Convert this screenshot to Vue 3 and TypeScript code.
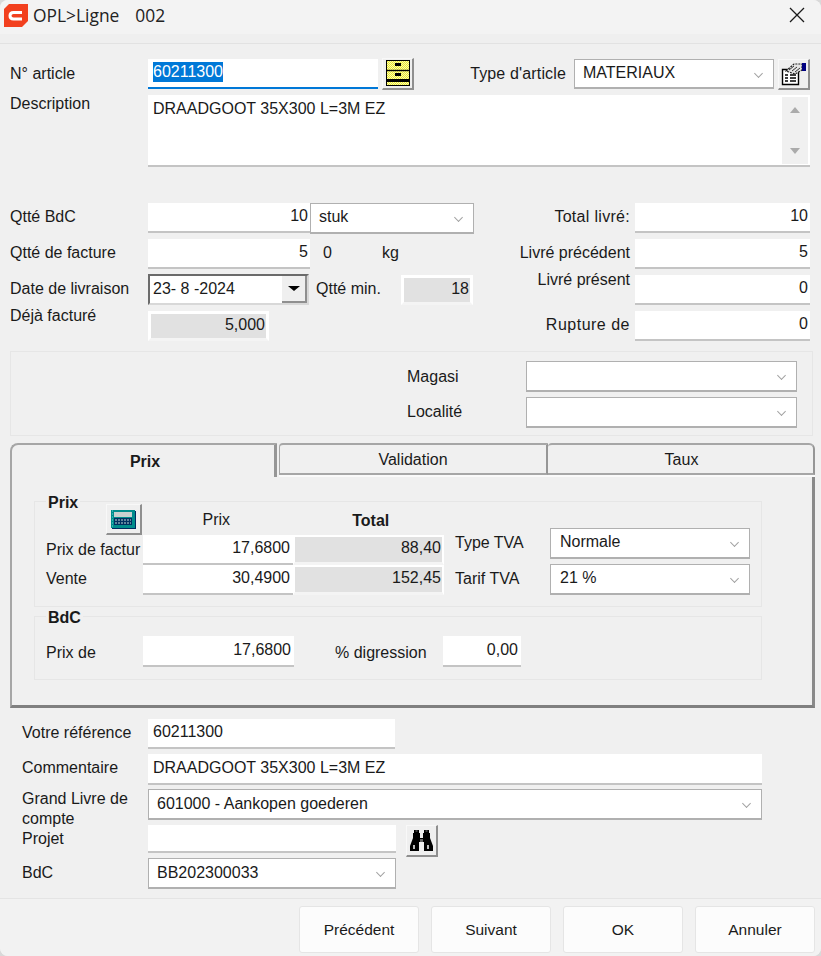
<script setup lang="ts">
const buttons: string[] = ['Précédent', 'Suivant', 'OK', 'Annuler']
</script>

<template>
  <div class="dialog">
    <header class="titlebar">
      <svg class="logo" width="25" height="25" viewBox="0 0 25 25">
        <path d="M6 1H25V18L19 24H1V6Z" fill="#f2401e" />
        <path d="M19 9.5H10.5Q7 9.5 7 12.7T10.5 16H19" fill="none" stroke="#fff" stroke-width="3" />
      </svg>
      <span class="title">OPL&gt;Ligne</span>
      <span class="title-num">002</span>
      <svg class="close" width="16" height="16" viewBox="0 0 16 16">
        <path d="M1 1L15 15M15 1L1 15" stroke="#1a1a1a" stroke-width="1.3" fill="none" />
      </svg>
    </header>
    <div class="title-strip"></div>

    <main class="form">
      <div class="row r-article">
        <span class="lab w138">N° article</span>
        <div class="edit focus w230"><span class="selected">60211300</span></div>
        <button class="tool drawer-btn">
          <svg width="24" height="26" viewBox="0 0 24 26">
            <defs>
              <pattern id="dither" width="2" height="2" patternUnits="userSpaceOnUse">
                <rect width="2" height="2" fill="#f4f4c0" />
                <rect width="1" height="1" fill="#f0f020" />
                <rect x="1" y="1" width="1" height="1" fill="#f0f020" />
              </pattern>
            </defs>
            <rect x="0.5" y="0.5" width="23" height="25" fill="url(#dither)" stroke="#000" />
            <path d="M1 10.5H23" stroke="#000" stroke-width="1.4" />
            <rect x="1" y="19" width="22" height="3" fill="#000" />
            <rect x="9" y="3" width="6" height="3" fill="#000" />
            <rect x="9" y="13" width="6" height="3" fill="#000" />
          </svg>
        </button>
        <span class="lab type-lab">Type d'article</span>
        <div class="combo w200 type-combo">MATERIAUX</div>
        <button class="tool form-btn">
          <svg width="26" height="24" viewBox="0 0 26 24">
            <path d="M1.5 7.5H17.5V22.5H1.5Z" fill="#fff" stroke="#000" stroke-width="1.4" />
            <path d="M4 13H7M9 13H15M4 16H7M9 16H15M4 19H7M9 19H15" stroke="#000" stroke-width="1.3" />
            <path d="M5 9L13 2H21V8L14 12Z" fill="#e4e4e4" stroke="#222" stroke-width="1.2" stroke-dasharray="2 1" />
            <path d="M8 8L13 4M11 9L16 5M14 10L19 6" stroke="#333" />
            <rect x="21" y="1" width="4" height="8" fill="#000080" />
          </svg>
        </button>
      </div>

      <div class="row r-desc">
        <span class="lab w138">Description</span>
        <div class="memo">
          <span class="memo-text">DRAADGOOT 35X300 L=3M EZ</span>
          <div class="scroll">
            <i class="tri-up"></i>
            <i class="tri-down"></i>
          </div>
        </div>
      </div>

      <div class="qty">
        <div class="row h30">
          <span class="lab w138 up">Qtté BdC</span>
          <div class="edit num w162">10</div>
          <div class="combo unit">stuk</div>
          <span class="lab right-lab up spaced">Total livré:</span>
          <div class="edit num w175">10</div>
        </div>
        <div class="row h30">
          <span class="lab w138 up">Qtté de facture</span>
          <div class="edit num w162">5</div>
          <span class="lab val-zero up">0</span>
          <span class="lab val-kg up">kg</span>
          <span class="lab right-lab up">Livré précédent</span>
          <div class="edit num w175">5</div>
        </div>
        <div class="row h30">
          <span class="lab w138 up">Date de livraison</span>
          <div class="date">
            <span>23- 8 -2024</span>
            <button class="date-btn"><i class="tri-black"></i></button>
          </div>
          <span class="lab min-lab up">Qtté min.</span>
          <div class="ro w72">18</div>
          <span class="lab right-lab top-lab">Livré présent</span>
          <div class="edit num w175">0</div>
        </div>
        <div class="row h30">
          <span class="lab w138 top-lab">Déjà facturé</span>
          <div class="ro w121">5,000</div>
          <span class="lab right-lab up wide">Rupture de</span>
          <div class="edit num w175">0</div>
        </div>
      </div>

      <section class="store">
        <div class="row h31">
          <span class="lab store-lab">Magasi</span>
          <div class="combo w271"></div>
        </div>
        <div class="row h31 mt5">
          <span class="lab store-lab up">Localité</span>
          <div class="combo w271"></div>
        </div>
      </section>

      <section class="tabset">
        <div class="tabs">
          <div class="tab active">Prix</div>
          <div class="tab second">Validation</div>
          <div class="tab third">Taux</div>
        </div>
        <div class="tab-body">
          <fieldset class="group g-prix">
            <span class="legend">Prix</span>
            <div class="price-left">
              <div class="price-head">
                <button class="tool calc-btn">
                  <svg width="25" height="20" viewBox="0 0 25 20">
                    <rect x="0" y="1" width="24" height="18" fill="#008c8c" />
                    <path d="M24 2V19H1V20H25V2Z" fill="#002a60" />
                    <path d="M1 2H2M1 5H2M1 8H2M1 11H2M1 14H2M1 17H2" stroke="#5fd8d8" />
                    <rect x="3" y="3" width="18" height="5" fill="#c8d0d0" />
                    <rect x="3" y="9" width="18" height="7" fill="#003060" />
                    <path d="M4 11H20M4 14H20" stroke="#c0d8d8" stroke-dasharray="2 1" />
                  </svg>
                </button>
                <span class="head-cell">Prix</span>
                <span class="head-cell total">Total</span>
              </div>
              <div class="price-row">
                <span class="lab price-lab">Prix de factur</span>
                <div class="edit num w150">17,6800</div>
                <div class="ro w151">88,40</div>
              </div>
              <div class="price-row">
                <span class="lab price-lab vente">Vente</span>
                <div class="edit num w150">30,4900</div>
                <div class="ro w151">152,45</div>
              </div>
            </div>
            <div class="price-right">
              <div class="row h31">
                <span class="lab w95 up">Type TVA</span>
                <div class="combo w200">Normale</div>
              </div>
              <div class="row h31 mt5">
                <span class="lab w95 up">Tarif TVA</span>
                <div class="combo w200">21 %</div>
              </div>
            </div>
          </fieldset>

          <fieldset class="group g-bdc">
            <span class="legend">BdC</span>
            <span class="lab price-lab">Prix de</span>
            <div class="edit num w151">17,6800</div>
            <span class="lab digress-lab">% digression</span>
            <div class="edit num w78">0,00</div>
          </fieldset>
        </div>
      </section>

      <div class="lower">
        <div class="row h30">
          <span class="lab w126 up">Votre référence</span>
          <div class="edit w247">60211300</div>
        </div>
        <div class="row h31 l-gap5">
          <span class="lab w126 up4">Commentaire</span>
          <div class="edit w614">DRAADGOOT 35X300 L=3M EZ</div>
        </div>
        <div class="row h31 l-gap4">
          <span class="lab w126 wrap-lab">Grand Livre de compte</span>
          <div class="combo w614 lower-combo">601000 - Aankopen goederen</div>
        </div>
        <div class="row h28 l-gap5">
          <span class="lab w126">Projet</span>
          <div class="edit w248"></div>
          <button class="tool bino-btn">
            <svg width="25" height="23" viewBox="0 0 25 23">
              <path d="M5 1H10V4H11V9H14V4H15V1H20V4H21V9L24 17V22H15V13H10V22H1V17L4 9V4H5Z" fill="#000" />
              <path d="M6.5 2H8.5M16.5 2H18.5" stroke="#777" />
              <rect x="4" y="16" width="2" height="4" fill="#bbb" />
              <rect x="18" y="16" width="2" height="4" fill="#bbb" />
              <rect x="11" y="10" width="3" height="3" fill="#666" />
            </svg>
          </button>
        </div>
        <div class="row h31 l-gap5">
          <span class="lab w126 up">BdC</span>
          <div class="combo w248 lower-combo">BB202300033</div>
        </div>
      </div>
    </main>

    <footer class="footer">
      <button v-for="label in buttons" :key="label" class="push">{{ label }}</button>
    </footer>
  </div>
</template>

<style>
html,
body {
  background: #d9d9d9;
}
</style>

<style scoped>
.dialog {
  width: 821px;
  height: 956px;
  display: flex;
  flex-direction: column;
  overflow: hidden;
  background: #f0f0f0;
  border-radius: 8px;
  font: 16px/18px "Liberation Sans", Arial, sans-serif;
  color: #1a1a1a;
}
.titlebar {
  height: 34px;
  flex: none;
  display: flex;
  align-items: center;
  background: #f3f3f3;
  position: relative;
}
.logo {
  margin-left: 3px;
  margin-top: -4px;
}
.title,
.title-num {
  font: 17.4px/20px "Open Sans", sans-serif;
  color: #222;
  margin-top: -4px;
}
.title {
  margin-left: 5px;
}
.title-num {
  margin-left: 16px;
}
.close {
  margin-left: auto;
  margin-right: 16px;
  margin-top: -4px;
}
.title-strip {
  height: 10px;
  flex: none;
  background: #efefef;
  border-bottom: 1px solid #e2e2e2;
  box-sizing: border-box;
}
.form {
  flex: 1;
  padding: 15px 0 0 10px;
}
.row {
  display: flex;
  align-items: center;
}
.r-article {
  height: 30px;
  width: 800px;
}
.r-desc {
  height: 72px;
  margin-top: 6px;
  width: 800px;
  align-items: flex-start;
}
.h28 { height: 28px; }
.h30 { height: 30px; }
.h31 { height: 31px; }
.mt5 { margin-top: 5px; }
.lab {
  flex: none;
  white-space: nowrap;
}
.up {
  margin-bottom: 2px;
}
.up4 {
  margin-bottom: 4px;
}
.top-lab {
  align-self: flex-start;
  margin-top: -4px;
}
.spaced {
  letter-spacing: 0.3px;
}
.wide {
  letter-spacing: 0.5px;
}
.w72 { width: 72px; }
.w78 { width: 78px; }
.w95 { width: 95px; }
.w121 { width: 121px; }
.w126 { width: 126px; }
.w138 { width: 138px; }
.w150 { width: 150px; }
.w151 { width: 151px; }
.w162 { width: 162px; }
.w175 { width: 175px; }
.w200 { width: 200px; }
.w230 { width: 230px; }
.w247 { width: 247px; }
.w248 { width: 248px; }
.w271 { width: 271px; }
.w614 { width: 614px; }

.edit,
.combo,
.ro {
  flex: none;
  box-sizing: border-box;
  height: 100%;
  display: flex;
  align-items: center;
  white-space: nowrap;
}
.edit {
  background: #fff;
  border-bottom: 2px solid #c4c4c4;
  padding: 0 5px 2px 5px;
}
.edit.focus {
  border-bottom: 2px solid #0078d7;
}
.edit.num {
  justify-content: flex-end;
  padding: 0 2px 2px 0;
}
.selected {
  background: #0078d7;
  color: #fff;
  line-height: 20px;
}
.combo {
  position: relative;
  background: #fff;
  border: 1px solid #b0b0b0;
  border-bottom-width: 2px;
  padding: 0 0 2px 9px;
}
.combo::after {
  content: "";
  position: absolute;
  right: 11px;
  top: 10px;
  width: 6px;
  height: 6px;
  border-right: 1px solid #a0a0a0;
  border-bottom: 1px solid #a0a0a0;
  transform: rotate(45deg) scale(0.9);
}
.ro {
  background: #e1e1e1;
  border: 3px solid #fff;
  border-bottom-color: #f4f4f4;
  justify-content: flex-end;
  padding: 0 1px 3px 0;
}
.tool {
  flex: none;
  box-sizing: border-box;
  padding: 0;
  background: #efefef;
  border: 0;
  border-top: 1px solid #f8f8f8;
  border-left: 1px solid #f8f8f8;
  border-right: 2px solid #8f8f8f;
  border-bottom: 2px solid #8f8f8f;
  display: flex;
  align-items: center;
  justify-content: center;
}
.drawer-btn {
  width: 32px;
  height: 32px;
  margin: -1px 0 0 4px;
}
.type-lab {
  margin-left: auto;
  margin-right: 8px;
  letter-spacing: 0.15px;
}
.type-combo {
  padding-left: 8px;
}
.form-btn {
  width: 32px;
  height: 31px;
  margin-left: 4px;
}
.memo {
  position: relative;
  width: 662px;
  height: 72px;
  box-sizing: border-box;
  background: #fff;
  border-bottom: 2px solid #c4c4c4;
  padding: 4px 5px;
}
.memo-text {
  line-height: 20px;
}
.scroll {
  position: absolute;
  top: 2px;
  right: 2px;
  width: 26px;
  height: 67px;
  background: #f0f0f0;
}
.tri-up,
.tri-down {
  position: absolute;
  left: 8px;
  width: 0;
  height: 0;
  border-left: 5px solid transparent;
  border-right: 5px solid transparent;
}
.tri-up {
  top: 10px;
  border-bottom: 6px solid #ababab;
}
.tri-down {
  bottom: 10px;
  border-top: 6px solid #ababab;
}

.qty {
  margin-top: 36px;
  width: 800px;
  display: flex;
  flex-direction: column;
  gap: 6px;
}
.unit {
  width: 164px;
  height: 31px;
  align-self: flex-start;
  padding-left: 8px;
}
.right-lab {
  margin-left: auto;
  margin-right: 5px;
}
.val-zero {
  margin-left: 13px;
}
.val-kg {
  margin-left: 50px;
}
.date {
  flex: none;
  position: relative;
  box-sizing: border-box;
  width: 161px;
  height: 31px;
  margin-top: -1px;
  background: #fff;
  border: 2px solid;
  border-color: #6b6b6b #d8d8d8 #d8d8d8 #6b6b6b;
  padding: 0 0 2px 3px;
  display: flex;
  align-items: center;
}
.date-btn {
  position: absolute;
  top: 0;
  right: 0;
  width: 25px;
  height: 27px;
  padding: 0;
  background: #efefef;
  border: 0;
  border-right: 2px solid #8f8f8f;
  border-bottom: 2px solid #8f8f8f;
  display: flex;
  align-items: center;
  justify-content: center;
}
.tri-black {
  width: 0;
  height: 0;
  border-left: 6px solid transparent;
  border-right: 6px solid transparent;
  border-top: 5px solid #000;
}
.min-lab {
  margin-left: 7px;
  width: 85px;
}

.store {
  margin-top: 10px;
  width: 803px;
  height: 85px;
  box-sizing: border-box;
  border: 1px solid #e6e6e6;
  padding-top: 9px;
}
.store-lab {
  margin-left: 396px;
  width: 119px;
}

.tabset {
  margin-top: 7px;
  width: 805px;
}
.tabs {
  display: flex;
  height: 34px;
  align-items: flex-start;
}
.tab {
  box-sizing: border-box;
  text-align: center;
  border-top: 2px solid #a6a6a6;
  background: #f0f0f0;
}
.active {
  width: 267px;
  height: 34px;
  padding: 8px 0 0 4px;
  font-weight: 700;
  border-left: 2px solid #a6a6a6;
  border-right: 3px solid #969696;
  border-top-left-radius: 8px;
}
.second,
.third {
  height: 32px;
  padding-top: 6px;
  border-right: 2px solid #969696;
  border-bottom: 2px solid #a6a6a6;
  box-shadow: 0 2px 0 #fafafa;
  border-top-left-radius: 4px;
}
.second {
  width: 269px;
  margin-left: 2px;
  border-left: 1px solid #a6a6a6;
}
.third {
  flex: 1;
  padding-left: 2px;
  border-top-right-radius: 6px;
}
.tab-body {
  box-sizing: border-box;
  height: 231px;
  border-left: 2px solid #a6a6a6;
  border-right: 3px solid #8a8a8a;
  border-bottom: 3px solid #808080;
  padding: 24px 0 0 22px;
}
.group {
  position: relative;
  margin: 0;
  box-sizing: border-box;
  width: 728px;
  border: 1px solid #e6e6e6;
  padding: 0;
  display: flex;
}
.g-prix {
  height: 106px;
}
.g-bdc {
  height: 64px;
  margin-top: 9px;
  padding: 19px 0 0 11px;
  align-items: flex-start;
}
.g-bdc .edit {
  height: 31px;
}
.g-bdc .price-lab {
  margin-top: 8px;
}
.legend {
  position: absolute;
  left: 11px;
  top: -8px;
  background: #f0f0f0;
  padding: 0 2px;
  font-weight: 700;
}
.price-left {
  width: 408px;
  padding-top: 2px;
}
.price-head {
  display: flex;
  height: 31px;
}
.calc-btn {
  width: 36px;
  height: 31px;
  margin-left: 71px;
}
.head-cell {
  width: 150px;
  text-align: center;
  padding: 7px 0 0 2px;
}
.head-cell.total {
  margin-left: 8px;
  padding-top: 8px;
  font-weight: 700;
}
.price-row {
  display: flex;
  align-items: center;
  height: 30px;
  padding-left: 11px;
}
.price-row .edit.num {
  padding-right: 3px;
}
.price-row .ro {
  border-width: 2px;
  border-bottom-width: 3px;
  padding-right: 1px;
}
.price-lab {
  width: 97px;
}
.vente {
  margin-bottom: 2px;
}
.price-right {
  margin-left: 12px;
  padding-top: 26px;
}
.digress-lab {
  margin: 8px 15px 0 41px;
  width: 93px;
}
.g-bdc .edit.num {
  padding-right: 3px;
}
.lower {
  margin: 11px 0 0 12px;
}
.l-gap4 { margin-top: 4px; }
.l-gap5 { margin-top: 5px; }
.wrap-lab {
  white-space: normal;
  line-height: 20px;
  align-self: flex-start;
  height: 31px;
}
.lower-combo {
  padding: 0 0 0 8px;
}
.bino-btn {
  width: 32px;
  height: 32px;
  margin-left: 10px;
  align-self: flex-start;
}
.footer {
  flex: none;
  height: 58px;
  box-sizing: border-box;
  border-top: 1px solid #e4e4e4;
  background: #f2f2f2;
  padding: 7px 6px 0 0;
  display: flex;
  justify-content: flex-end;
  gap: 12px;
}
.push {
  width: 120px;
  height: 47px;
  background: #fcfcfc;
  border: 1px solid #e5e5e5;
  border-radius: 3px;
  font: 15.5px/18px "Liberation Sans", Arial, sans-serif;
  color: #1a1a1a;
}
</style>
